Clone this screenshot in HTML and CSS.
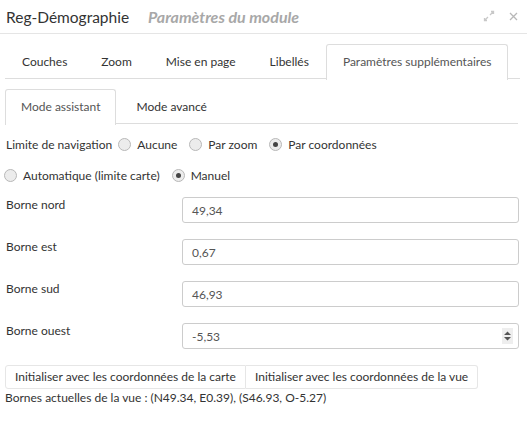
FILE: index.html
```html
<!DOCTYPE html>
<html lang="fr">
<head>
<meta charset="utf-8">
<link rel="stylesheet" href="styles.css">
</head>
<body>
<div class="header">
  <span class="title">Reg-Démographie</span>
  <span class="subtitle">Paramètres du module</span>
  <span class="icons">
    <svg class="ico-expand" width="12" height="12" viewBox="0 0 12 12"><path d="M7 5 L10.5 1.5 M8 1.5 H10.5 V4 M5 7 L1.5 10.5 M1.5 8 V10.5 H4" fill="none" stroke="#c8c8c8" stroke-width="1.3"/></svg>
    <svg class="ico-close" width="9" height="9" viewBox="0 0 9 9"><path d="M1 1 L8 8 M8 1 L1 8" stroke="#b8b8b8" stroke-width="1.3"/></svg>
  </span>
</div>

<div class="tabs">
  <div class="tab">Couches</div>
  <div class="tab">Zoom</div>
  <div class="tab">Mise en page</div>
  <div class="tab">Libellés</div>
  <div class="tab active">Paramètres supplémentaires</div>
</div>

<div class="subtabs">
  <div class="tab active">Mode assistant</div>
  <div class="tab">Mode avancé</div>
</div>

<div class="row row1">
  <span class="lbl">Limite de navigation</span>
  <span class="radio"></span><span class="rtext">Aucune</span>
  <span class="radio"></span><span class="rtext">Par zoom</span>
  <span class="radio checked"></span><span class="rtext">Par coordonnées</span>
</div>
<div class="row row2">
  <span class="radio first"></span><span class="rtext">Automatique (limite carte)</span>
  <span class="radio checked"></span><span class="rtext">Manuel</span>
</div>

<div class="field field-first">
  <label class="flabel">Borne nord</label>
  <div class="input">49,34</div>
</div>
<div class="field">
  <label class="flabel">Borne est</label>
  <div class="input">0,67</div>
</div>
<div class="field">
  <label class="flabel">Borne sud</label>
  <div class="input">46,93</div>
</div>
<div class="field">
  <label class="flabel">Borne ouest</label>
  <div class="input">-5,53
    <span class="spin"><svg width="9" height="12" viewBox="0 0 9 12"><path d="M4.5 1.5 L8 5 H1 Z M1 7 H8 L4.5 10.5 Z" fill="#555"/></svg></span>
  </div>
</div>

<div class="btns">
  <div class="btn">Initialiser avec les coordonnées de la carte</div>
  <div class="btn">Initialiser avec les coordonnées de la vue</div>
</div>
<div class="bounds">Bornes actuelles de la vue : (N49.34, E0.39), (S46.93, O-5.27)</div>
</body>
</html>
```

FILE: styles.css
```css
html, body {
  margin: 0;
  padding: 0;
  background: #fff;
}
body {
  font-family: Lato, "Open Sans", sans-serif;
  font-size: 12px;
  color: #333;
  width: 527px;
  height: 426px;
  overflow: hidden;
}
.header {
  height: 33px;
  border-bottom: 1px solid #e5e5e5;
  display: flex;
  align-items: center;
  padding-left: 6px;
}
.title {
  font-size: 15.5px;
  color: #333;
}
.subtitle {
  font-size: 16px;
  font-weight: bold;
  font-style: italic;
  color: #a8a8a8;
  margin-left: 19px;
}
.icons {
  margin-left: auto;
  display: flex;
  align-items: center;
  gap: 14px;
  padding-right: 9px;
}
.ico-expand { position: relative; top: -1px; }

.tabs {
  display: flex;
  margin: 10px 7px 0 5px;
  border-bottom: 1px solid #ddd;
  height: 34px;
}
.tab {
  padding: 0 16px;
  height: 34px;
  line-height: 34px;
  border: 1px solid transparent;
  border-bottom: none;
  border-radius: 3px 3px 0 0;
  color: #333;
  white-space: nowrap;
}
.tab.active {
  border-color: #ddd;
  background: #fff;
  height: 35px;
  color: #555;
}
.subtabs {
  display: flex;
  margin: 10px 9px 0 5px;
  border-bottom: 1px solid #ddd;
  height: 34px;
}
.subtabs .tab {
  padding: 0 16px 0 17px;
}
.subtabs .tab.active {
  padding: 0 14px 0 15px;
  margin-right: 3px;
}

.row {
  display: flex;
  align-items: center;
  height: 20px;
  padding-left: 6px;
}
.row1 { margin-top: 10px; }
.row2 { margin-top: 11px; padding-left: 4px; }
.radio {
  width: 11px;
  height: 11px;
  border: 1px solid #b8b8b8;
  border-radius: 50%;
  background: #ececec;
  margin: 0 6px 0 12px;
  position: relative;
  flex: none;
}
.lbl + .radio { margin-left: 6px; }
.radio.first { margin-left: 0; }
.radio.checked::after {
  content: "";
  position: absolute;
  left: 3px;
  top: 3px;
  width: 5px;
  height: 5px;
  border-radius: 50%;
  background: #444;
}

.field {
  display: flex;
  align-items: flex-start;
  margin: 16px 8px 0 6px;
}
.field.field-first { margin-top: 12px; }
.flabel {
  width: 176px;
  line-height: 16px;
}
.input {
  flex: 1;
  height: 24px;
  border: 1px solid #ccc;
  border-radius: 3px;
  padding: 0 9px;
  color: #555;
  display: flex;
  align-items: center;
}
.spin {
  margin-left: auto;
  margin-right: -4px;
  width: 11px;
  height: 16px;
  background: #eee;
  display: flex;
  align-items: center;
  justify-content: center;
}

.btns {
  display: flex;
  margin: 16px 0 0 5px;
}
.btn {
  height: 22px;
  line-height: 22px;
  border: 1px solid #e6e6e6;
  padding: 0 9px;
  color: #333;
  background: #fff;
  white-space: nowrap;
}
.btn:first-child { border-radius: 3px 0 0 3px; }
.btn:last-child { border-radius: 0 3px 3px 0; border-left: none; }
.bounds {
  padding-left: 5px;
  line-height: 17px;
}
```
